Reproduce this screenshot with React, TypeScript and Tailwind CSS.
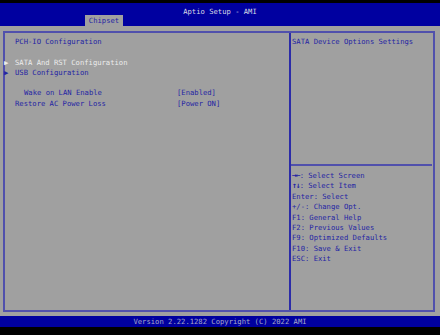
import type { ReactNode } from "react";

const helpLines = [
  ["→←", ": Select Screen"],
  ["↑↓", ": Select Item"],
  ["", "Enter: Select"],
  ["", "+/-: Change Opt."],
  ["", "F1: General Help"],
  ["", "F2: Previous Values"],
  ["", "F9: Optimized Defaults"],
  ["", "F10: Save & Exit"],
  ["", "ESC: Exit"],
];

function Row({ children, arrow, white }: { children: ReactNode; arrow?: boolean; white?: boolean }) {
  return (
    <div className={`relative h-[10.3px] ${white ? "text-[#ececec]" : "text-[#2424a4]"}`}>
      {arrow && <span className="absolute left-[-11px] top-[0px] text-[7px]">▶</span>}
      {children}
    </div>
  );
}

export default function App() {
  return (
    <div
      className="w-[440px] h-[335px] flex flex-col bg-[#a0a0a0] text-[7.2px] leading-[10.3px] whitespace-pre"
      style={{ fontFamily: '"DejaVu Sans Mono", "Liberation Mono", monospace' }}
    >
      <div className="h-[3px] bg-black" />
      <div className="h-[23px] bg-[#0000a0] relative">
        <div className="text-center text-[#d8d8e4] pt-[4px]">Aptio Setup - AMI</div>
        <div className="absolute left-[85px] bottom-0 w-[38px] h-[11px] bg-[#a0a0a0] text-[#2424a4] text-center leading-[11px]">
          Chipset
        </div>
      </div>

      <div className="pt-[5px] pl-[3px] pr-[5px] pb-[4px]">
        <div className="h-[281px] border-2 border-[#5050ac] flex">
          <div className="w-[286px] border-r-2 border-[#2c2ca8] pl-[10px] pt-[4px]">
            <Row>PCH-IO Configuration</Row>
            <Row>{" "}</Row>
            <Row arrow white>SATA And RST Configuration</Row>
            <Row arrow>USB Configuration</Row>
            <Row>{" "}</Row>
            <div className="flex h-[10.3px] text-[#2424a4]">
              <span className="w-[162px] pl-[9px]">Wake on LAN Enable</span>
              <span>[Enabled]</span>
            </div>
            <div className="flex h-[10.3px] text-[#2424a4]">
              <span className="w-[162px]">Restore AC Power Loss</span>
              <span>[Power ON]</span>
            </div>
          </div>

          <div className="flex-1 flex flex-col text-[#2424a4]">
            <div className="h-[131px] pl-[1px] pt-[4px]">SATA Device Options Settings</div>
            <div className="h-[2px] mr-[1px] bg-[#5050ac]" />
            <div className="pl-[1px] pt-[5px]">
              {helpLines.map(([k, l]) => (
                <div key={l} className="h-[10.4px]">
                  {k && <span className="text-[8px] font-bold tracking-[-1px]">{k}</span>}
                  {l}
                </div>
              ))}
            </div>
          </div>
        </div>
      </div>

      <div className="h-[11px] bg-[#0000a0] text-center text-[#a8a8c8] leading-[11px]">
        Version 2.22.1282 Copyright (C) 2022 AMI
      </div>
      <div className="h-[8px] bg-black" />
    </div>
  );
}
